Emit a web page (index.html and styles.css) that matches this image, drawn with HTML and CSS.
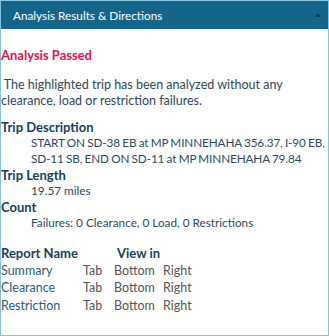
FILE: index.html
```html
<!DOCTYPE html>
<html lang="en">
<head>
  <meta charset="UTF-8">
  <title>Analysis Results</title>
  <link rel="stylesheet" href="styles.css">
</head>
<body>
  <div class="panel">
    <div class="panel-header">
      <span class="panel-title">Analysis Results &amp; Directions</span>
      <span class="caret"></span>
    </div>
    <div class="panel-body">
      <div class="status">Analysis Passed</div>
      <p class="summary">&nbsp;The highlighted trip has been analyzed without any clearance, load or restriction failures.</p>
      <dl class="details">
        <dt>Trip Description</dt>
        <dd class="route">START ON SD-38 EB at MP MINNEHAHA 356.37, I-90&nbsp;EB, SD-11 SB, END ON SD-11 at MP MINNEHAHA 79.84</dd>
        <dt>Trip Length</dt>
        <dd>19.57 miles</dd>
        <dt>Count</dt>
        <dd>Failures: 0 Clearance, 0 Load, 0 Restrictions</dd>
      </dl>
      <div class="reports">
        <div class="reports-head">Report Name</div>
        <div class="reports-head view-head">View in</div>
        <div class="report-name">Summary</div>
        <div class="opt">Tab</div><div class="opt">Bottom</div><div class="opt">Right</div>
        <div class="report-name">Clearance</div>
        <div class="opt">Tab</div><div class="opt">Bottom</div><div class="opt">Right</div>
        <div class="report-name">Restriction</div>
        <div class="opt">Tab</div><div class="opt">Bottom</div><div class="opt">Right</div>
      </div>
    </div>
  </div>
</body>
</html>
```
FILE: styles.css
```css
body {
  margin: 0;
  font-family: Lato, "Noto Sans", sans-serif;
  font-size: 12.5px;
  color: #2c4a5c;
}
.panel {
  width: 329px;
  height: 336px;
  box-sizing: border-box;
  border: 1px solid #86c3dd;
  background: #fff;
}
.panel-header {
  height: 28px;
  background-color: #15658a;
  color: #fff;
  display: flex;
  align-items: center;
  justify-content: space-between;
  padding: 0 7px 0 12px;
  font-size: 11.75px;
}
.caret {
  width: 0;
  height: 0;
  margin-top: -1px;
  border-left: 3px solid transparent;
  border-right: 3px solid transparent;
  border-bottom: 4px solid #0b3f57;
}
.status {
  margin-top: 18px;
  color: #e5124e;
  font-weight: bold;
  font-size: 13px;
  line-height: 16px;
}
.summary {
  margin: 14px 0 0;
  line-height: 16px;
  padding-right: 2px;
}
.details {
  margin: 10px 0 0;
  line-height: 16px;
}
.details dt {
  font-weight: bold;
  color: #163f5a;
  font-size: 13px;
}
.details dd {
  margin: 0 0 0 30px;
  font-size: 11.75px;
}
.details .route {
  letter-spacing: -0.12px;
  word-spacing: -0.6px;
}
.reports {
  margin-top: 13px;
  display: grid;
  grid-template-columns: 82px 31px 49px auto;
  grid-auto-rows: 17.5px;
  align-items: center;
}
.reports-head {
  font-weight: bold;
  color: #163f5a;
  font-size: 13px;
  white-space: nowrap;
}
.view-head {
  grid-column: 2 / span 3;
  padding-left: 34px;
}
.report-name {
  color: #2f5b75;
}
.opt {
  color: #555;
}
```
